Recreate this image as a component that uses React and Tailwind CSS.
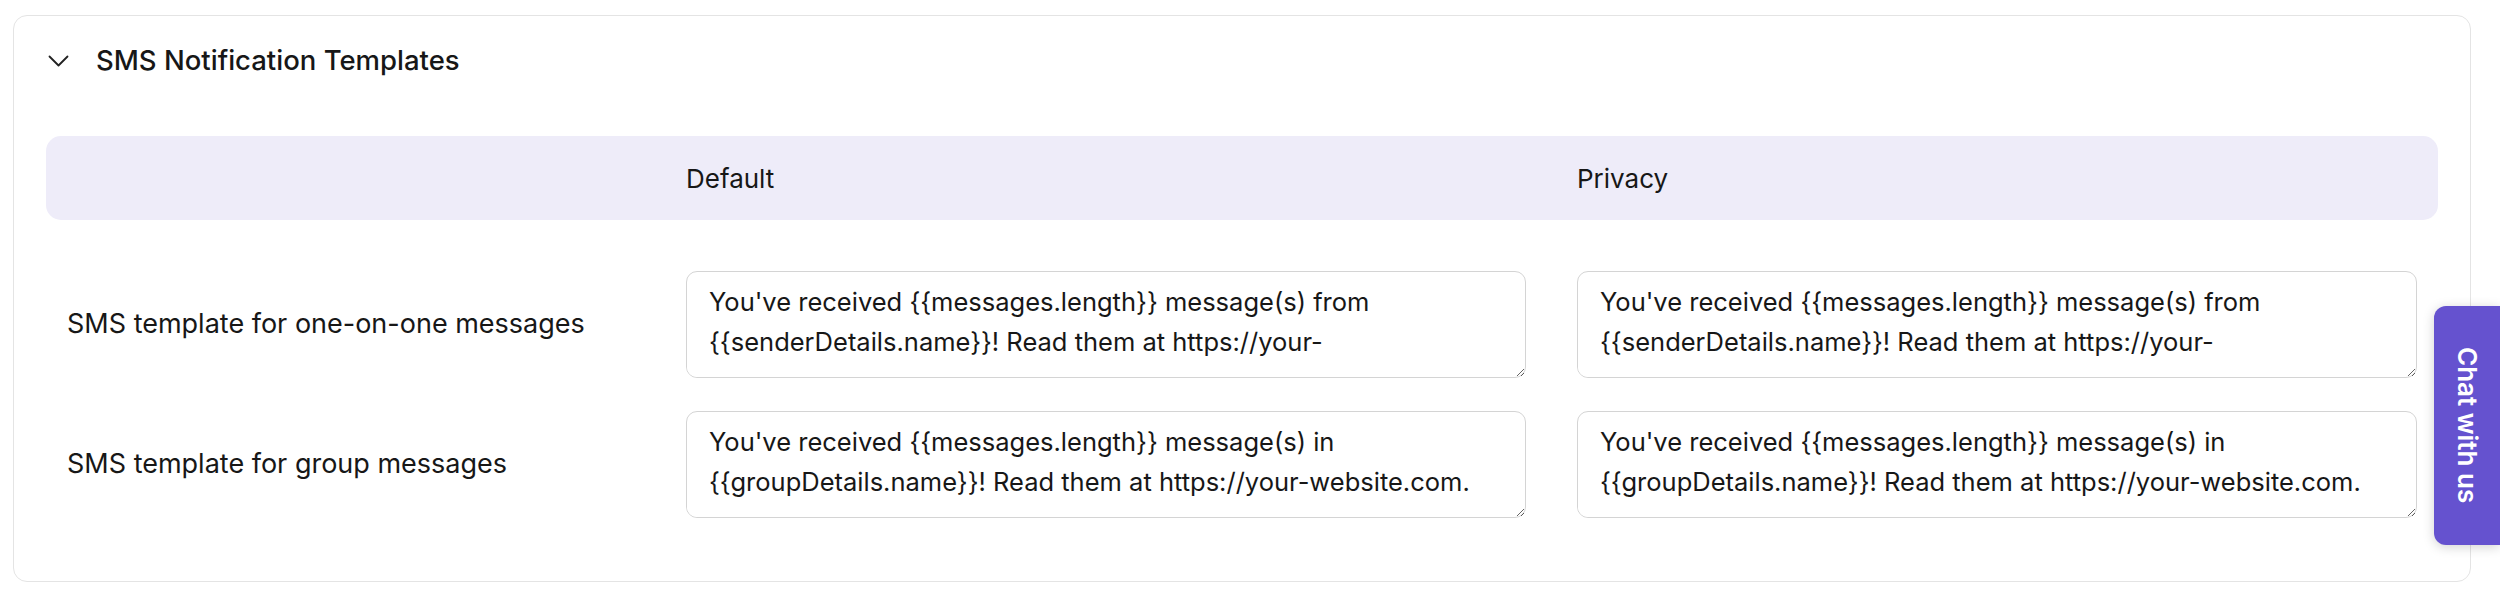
import { useState } from 'react';

const templates = [
  {
    id: 'direct',
    label: 'SMS template for one-on-one messages',
    text: "You've received {{messages.length}} message(s) from {{senderDetails.name}}! Read them at https://your-website.com.",
  },
  {
    id: 'group',
    label: 'SMS template for group messages',
    text: "You've received {{messages.length}} message(s) in {{groupDetails.name}}! Read them at https://your-website.com.",
  },
];

const ChevronDown = () => (
  <svg width="21" height="12" viewBox="0 0 21 12" fill="none" className="shrink-0">
    <polyline points="1.5,1.5 10.5,10.5 19.5,1.5" stroke="#222" strokeWidth="1.8" strokeLinecap="round" strokeLinejoin="round" />
  </svg>
);

const App = () => {
  const [values, setValues] = useState(
    templates.reduce((acc, t) => ({ ...acc, [t.id + '-default']: t.text, [t.id + '-privacy']: t.text }), {})
  );

  const handleChange = (key, value) => {
    setValues({ ...values, [key]: value });
  };

  return (
    <div className="relative min-h-screen bg-white pl-[13px] pr-[29px] pt-[15px] font-['Inter','Liberation_Sans',sans-serif] text-[#171717]">
      <div className="rounded-[14px] border border-[#e4e4e4] bg-white px-[32px] pb-[63px]">
        <div className="flex h-[90px] items-center gap-[27px] pl-[2px]">
          <ChevronDown />
          <h2 className="text-[27.5px] font-medium">SMS Notification Templates</h2>
        </div>

        <div className="mt-[30px] grid h-[84px] grid-cols-[640px_891px_1fr] items-center rounded-[15px] bg-[#eeecf9] text-[26px]">
          <div></div>
          <div>Default</div>
          <div>Privacy</div>
        </div>

        <div className="mt-[51px] flex flex-col gap-[33px]">
          {templates.map((t) => (
            <div key={t.id} className="grid grid-cols-[640px_891px_1fr] items-center">
              <div className="pl-[21px] text-[27px]">{t.label}</div>
              {['default', 'privacy'].map((col) => (
                <div key={col} className="relative h-[107px] w-[840px]">
                  <textarea
                    value={values[t.id + '-' + col]}
                    onChange={(e) => handleChange(t.id + '-' + col, e.target.value)}
                    className="block h-[107px] w-[840px] overflow-hidden rounded-[11px] border border-[#d4d4d4] pl-[22px] pr-[53px] pt-[10px] text-[25.5px] leading-[40px] text-[#171717] focus:outline-none"
                  />
                  {/* hides the clipped third line, like the original */}
                  <div className="pointer-events-none absolute bottom-[1px] left-[1px] right-[20px] h-[16px] rounded-bl-[10px] bg-white" />
                </div>
              ))}
            </div>
          ))}
        </div>
      </div>

      {/* floating chat tab */}
      <button className="absolute right-0 top-[306px] flex h-[239px] w-[66px] items-center justify-center rounded-l-[12px] bg-[#6552cf] shadow-[0_2px_12px_rgba(0,0,0,0.18)]">
        <span className="text-[26px] font-semibold text-white [writing-mode:vertical-rl]">Chat with us</span>
      </button>
    </div>
  );
};

export default App;
